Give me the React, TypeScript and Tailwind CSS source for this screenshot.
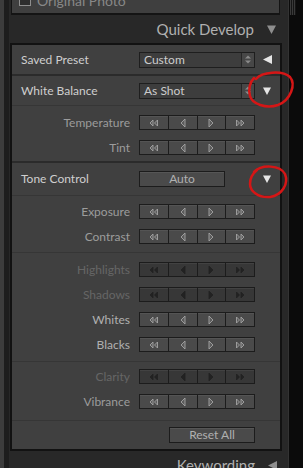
import React from "react";

type Step = "dleft" | "left" | "right" | "dright";

function StepIcon({ kind, dim }: { kind: Step; dim: boolean }) {
  const fill = dim ? "#222222" : "#5c5c5c";
  const stroke = dim ? "#222222" : "#a4a4a4";
  const tri = (pts: string, k: number) => (
    <polygon key={k} points={pts} fill={fill} stroke={stroke} strokeWidth={0.9} strokeLinejoin="round" />
  );
  return (
    <svg width="12" height="10" viewBox="0 0 12 10">
      {kind === "dleft" && [tri("5,2 5,8 2,5", 0), tri("9.5,2 9.5,8 6.5,5", 1)]}
      {kind === "left" && tri("8,1 8,9 4,5", 0)}
      {kind === "right" && tri("4,1 4,9 8,5", 0)}
      {kind === "dright" && [tri("2.5,2 2.5,8 5.5,5", 0), tri("7,2 7,8 10,5", 1)]}
    </svg>
  );
}

function Stepper({ dim }: { dim: boolean }) {
  const bg = dim ? "bg-[#373737]" : "bg-[#4a4a4a]";
  const segs: { k: Step; w: string }[] = [
    { k: "dleft", w: "w-[30px]" },
    { k: "left", w: "w-[28px]" },
    { k: "right", w: "w-[28px]" },
    { k: "dright", w: "w-[30px]" },
  ];
  return (
    <div className="flex h-[15px] w-[116px] border border-[#1c1c1c] bg-[#1c1c1c] gap-px">
      {segs.map((s) => (
        <div key={s.k} className={`${s.w} flex-1 flex items-center justify-center ${bg} shadow-[inset_0_1px_0_rgba(255,255,255,0.06)]`}>
          <StepIcon kind={s.k} dim={dim} />
        </div>
      ))}
    </div>
  );
}

function SliderRow({ label, tone }: { label: string; tone: "normal" | "bright" | "dim" }) {
  const color = tone === "dim" ? "text-[#666666]" : tone === "bright" ? "text-[#b0b0b0]" : "text-[#9c9c9c]";
  return (
    <div className="flex h-[25px] items-center">
      <div className={`w-[118px] text-right text-[12px] ${color}`}>{label}</div>
      <div className="ml-[9px]">
        <Stepper dim={tone === "dim"} />
      </div>
    </div>
  );
}

function Tri({ dir, color, size = 8 }: { dir: "down" | "left"; color: string; size?: number }) {
  return (
    <svg width={size} height={size} viewBox="0 0 8 8">
      {dir === "down" ? <polygon points="0,0.5 8,0.5 4,8" fill={color} /> : <polygon points="8,0 8,8 0,4" fill={color} />}
    </svg>
  );
}

function Select({ value }: { value: string }) {
  return (
    <div className="flex h-[16px] w-[116px] border border-[#1e1e1e] bg-[#3d3d3d]">
      <div className="flex-1 pl-[4px] text-[12px] leading-[14px] text-[#cccccc]">{value}</div>
      <div className="w-[13px] border-l border-[#262626] bg-[#474747] flex items-center justify-center">
        <svg width="6" height="9" viewBox="0 0 6 9">
          <polygon points="0,3.5 6,3.5 3,0.5" fill="#8a8a8a" />
          <polygon points="0,5.5 6,5.5 3,8.5" fill="#8a8a8a" />
        </svg>
      </div>
    </div>
  );
}

function HeaderRow({ label, children, arrow, h }: { label: string; children: React.ReactNode; arrow: "down" | "left"; h: string }) {
  return (
    <div className={`flex ${h} items-center`}>
      <div className="w-[127px] pl-[9px] text-[12px] text-[#cfcfcf]">{label}</div>
      <div className="w-[116px]">{children}</div>
      <div className="flex-1 flex justify-center pr-[1px]">
        <Tri dir={arrow} color="#e6e6e6" size={arrow === "left" ? 9 : 8} />
      </div>
    </div>
  );
}

function Button({ text, w }: { text: string; w: string }) {
  return (
    <div className={`${w} h-[16px] border border-[#1c1c1c] bg-[#4a4a4a] shadow-[inset_0_1px_0_rgba(255,255,255,0.07)] flex items-center justify-center text-[12px] text-[#b0b0b0]`}>
      {text}
    </div>
  );
}

export default function App() {
  return (
    <div className="relative flex h-[468px] w-[303px] overflow-hidden bg-[#282828] font-['Lato','Liberation_Sans',sans-serif]">
      <div className="w-[4px] bg-[#3c3c3c]" />
      <div className="w-[5px] bg-[#1d1d1d]" />
      <div className="w-[279px] flex flex-col">
        {/* panel above, cut off */}
        <div className="ml-[2px] w-[269px] h-[15px] shrink-0 overflow-hidden border-x border-b-2 border-[#141414] bg-[#3f3f3f]">
          <div className="flex items-center gap-[6px] pl-[7px] mt-[-8px] h-[16px]">
            <div className="w-[12px] h-[12px] border border-[#8e8e8e] bg-[#2e2e2e]" />
            <span className="text-[14px] text-[#888888]">Original Photo</span>
          </div>
        </div>

        <div className="flex h-[28px] shrink-0 items-center justify-end pr-[12px]">
          <span className="text-[15px] text-[#b0b0b0]">Quick Develop</span>
          <span className="ml-[13px]">
            <Tri dir="down" color="#8e8e8e" size={9} />
          </span>
        </div>

        <div className="ml-[1px] w-[272px] shrink-0 border-2 border-[#121212] bg-[#404040]">
          <div className="border-b-2 border-[#2b2b2b]">
            <HeaderRow label="Saved Preset" arrow="left" h="h-[29px]">
              <Select value="Custom" />
            </HeaderRow>
          </div>
          <div className="border-b border-[#363636]">
            <HeaderRow label="White Balance" arrow="down" h="h-[29px]">
              <Select value="As Shot" />
            </HeaderRow>
          </div>
          <div className="pt-[4px] pb-[1px] border-b-2 border-[#2b2b2b]">
            <SliderRow label="Temperature" tone="normal" />
            <SliderRow label="Tint" tone="normal" />
          </div>
          <div className="border-b border-[#363636]">
            <HeaderRow label="Tone Control" arrow="down" h="h-[32px]">
              <Button text="Auto" w="w-[86px]" />
            </HeaderRow>
          </div>
          <div className="pt-[3px] pb-[3px] border-b border-[#363636]">
            <SliderRow label="Exposure" tone="normal" />
            <SliderRow label="Contrast" tone="normal" />
          </div>
          <div className="pt-[4px] pb-[4px] border-b border-[#363636]">
            <SliderRow label="Highlights" tone="dim" />
            <SliderRow label="Shadows" tone="dim" />
            <SliderRow label="Whites" tone="bright" />
            <SliderRow label="Blacks" tone="bright" />
          </div>
          <div className="pt-[2px] pb-[6px] border-b border-[#363636]">
            <SliderRow label="Clarity" tone="dim" />
            <SliderRow label="Vibrance" tone="normal" />
          </div>
          <div className="flex h-[28px] items-center pl-[157px]">
            <Button text="Reset All" w="w-[86px]" />
          </div>
        </div>

        <div className="flex h-[28px] shrink-0 items-center justify-end pr-[11px]">
          <span className="text-[15px] text-[#b0b0b0]">Keywording</span>
          <span className="ml-[13px]">
            <Tri dir="left" color="#8e8e8e" size={9} />
          </span>
        </div>
      </div>

      {/* scrollbar column */}
      <div className="w-[15px] border-l border-[#333333] bg-[#0b0b0b] flex flex-col">
        <div className="ml-[1px] w-[6px] h-[15px] bg-[repeating-linear-gradient(90deg,#3a3a3a_0px,#3a3a3a_1px,#161616_1px,#161616_2px)]" />
      </div>

      {/* red hand-drawn annotations */}
      <svg className="pointer-events-none absolute left-0 top-0" width="303" height="468" viewBox="0 0 303 468">
        <path
          d="M 256 79 C 262 72, 282 70, 290 77 C 296 84, 291 100, 278 105 C 266 109, 252 104, 250 96 C 248 89, 250 82, 254 78"
          fill="none"
          stroke="#d51616"
          strokeWidth="2.5"
          strokeLinecap="round"
        />
        <path
          d="M 254 172 C 262 164, 280 165, 285 174 C 289 184, 282 195, 270 197 C 258 198, 250 191, 250 184 C 250 178, 252 174, 257 170"
          fill="none"
          stroke="#d51616"
          strokeWidth="2.5"
          strokeLinecap="round"
        />
      </svg>
    </div>
  );
}
